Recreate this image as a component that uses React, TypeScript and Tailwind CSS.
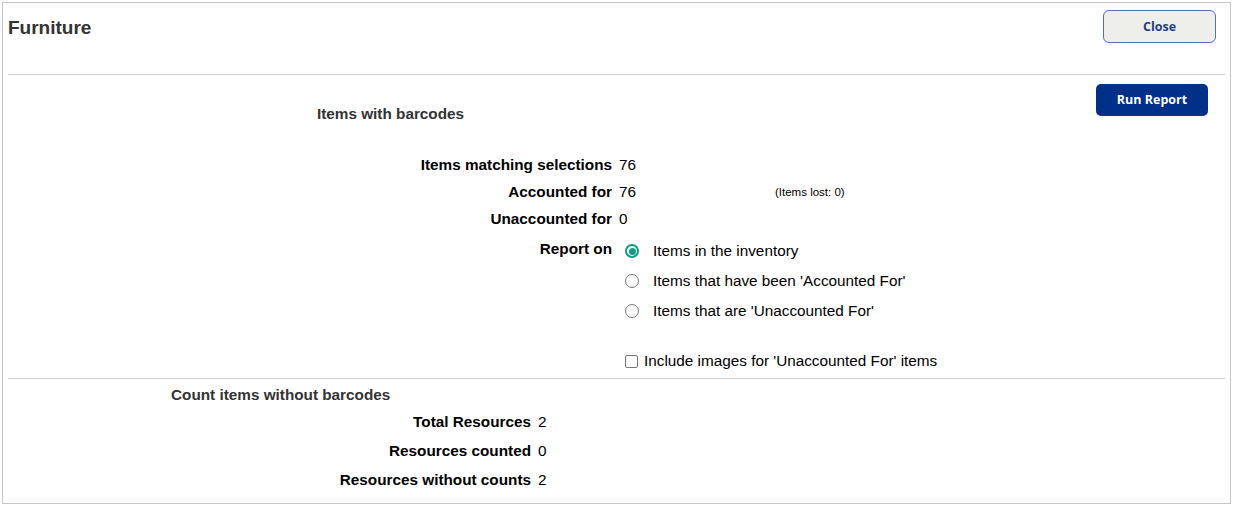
import React from 'react';

const font = 'font-["Liberation_Sans",Arial,sans-serif]';

const Radio = ({ checked }: { checked?: boolean }) =>
  checked ? (
    <span className="flex h-[14px] w-[14px] shrink-0 items-center justify-center rounded-full border-2 border-[#119c84] bg-white">
      <span className="h-[7px] w-[7px] rounded-full bg-[#119c84]" />
    </span>
  ) : (
    <span className="h-[14px] w-[14px] shrink-0 rounded-full border border-[#767676] bg-white" />
  );

const Row = ({ label, value, extra }: { label: string; value: string; extra?: React.ReactNode }) => (
  <div className="grid h-[27px] grid-cols-[609px_auto] items-center gap-x-[7px]">
    <span className="text-right font-bold text-black">{label}</span>
    <div className="flex items-center">
      <span className="w-[156px] text-black">{value}</span>
      {extra}
    </div>
  </div>
);

const CountRow = ({ label, value }: { label: string; value: string }) => (
  <div className="grid h-[29px] grid-cols-[528px_auto] items-center gap-x-[7px]">
    <span className="text-right font-bold text-black">{label}</span>
    <span className="text-black">{value}</span>
  </div>
);

const options = [
  { label: 'Items in the inventory', checked: true },
  { label: "Items that have been 'Accounted For'", checked: false },
  { label: "Items that are 'Unaccounted For'", checked: false },
];

export default function App() {
  return (
    <div className={`${font} bg-white p-[2px] text-[15.3px] leading-[18px]`}>
      <div className="border border-[#c6c6c6]">
        {/* header */}
        <div className="flex h-[71px] items-start justify-between pl-[5px] pr-[14px] pt-[7px]">
          <h1 className="mt-[7px] text-[19px] font-bold leading-[22px] text-[#333]">Furniture</h1>
          <button className='h-[33px] w-[113px] rounded-[6px] border border-[#5571ab] bg-[#eeeeea] font-["Open_Sans",sans-serif] text-[12.5px] font-bold text-[#1d3f8c]'>
            Close
          </button>
        </div>
        <div className="mx-[5px] border-t border-[#cfcfcf]" />

        {/* items with barcodes */}
        <div className="flex items-start justify-between">
          <div className="pl-[314px] pt-[30px] font-bold text-[#333]">Items with barcodes</div>
          <button className='mr-[22px] mt-[9px] h-[32px] w-[112px] rounded-[5px] bg-[#003087] font-["Open_Sans",sans-serif] text-[12.5px] font-bold text-white'>
            Run Report
          </button>
        </div>

        <div className="mt-[28px]">
          <Row label="Items matching selections" value="76" />
          <Row
            label="Accounted for"
            value="76"
            extra={<span className="text-[11.5px] text-black">(Items lost: 0)</span>}
          />
          <Row label="Unaccounted for" value="0" />
        </div>

        <div className="mt-[4px] grid grid-cols-[609px_auto] gap-x-[7px]">
          <span className="pt-[4px] text-right font-bold text-black">Report on</span>
          <div>
            {options.map((o) => (
              <label key={o.label} className="flex h-[30px] items-center gap-[14px] pl-[6px] text-black">
                <Radio checked={o.checked} />
                <span>{o.label}</span>
              </label>
            ))}
            <label className="mt-[25px] flex h-[20px] items-center gap-[6px] pl-[6px] text-black">
              <span className="h-[13px] w-[13px] shrink-0 rounded-[2px] border border-[#767676] bg-white" />
              <span>Include images for 'Unaccounted For' items</span>
            </label>
          </div>
        </div>

        <div className="mx-[5px] mt-[7px] border-t border-[#cfcfcf]" />

        {/* count items without barcodes */}
        <div className="pb-[9px]">
          <div className="pl-[168px] pt-[7px] font-bold text-[#333]">Count items without barcodes</div>
          <div className="mt-[3px]">
            <CountRow label="Total Resources" value="2" />
            <CountRow label="Resources counted" value="0" />
            <CountRow label="Resources without counts" value="2" />
          </div>
        </div>
      </div>
    </div>
  );
}
